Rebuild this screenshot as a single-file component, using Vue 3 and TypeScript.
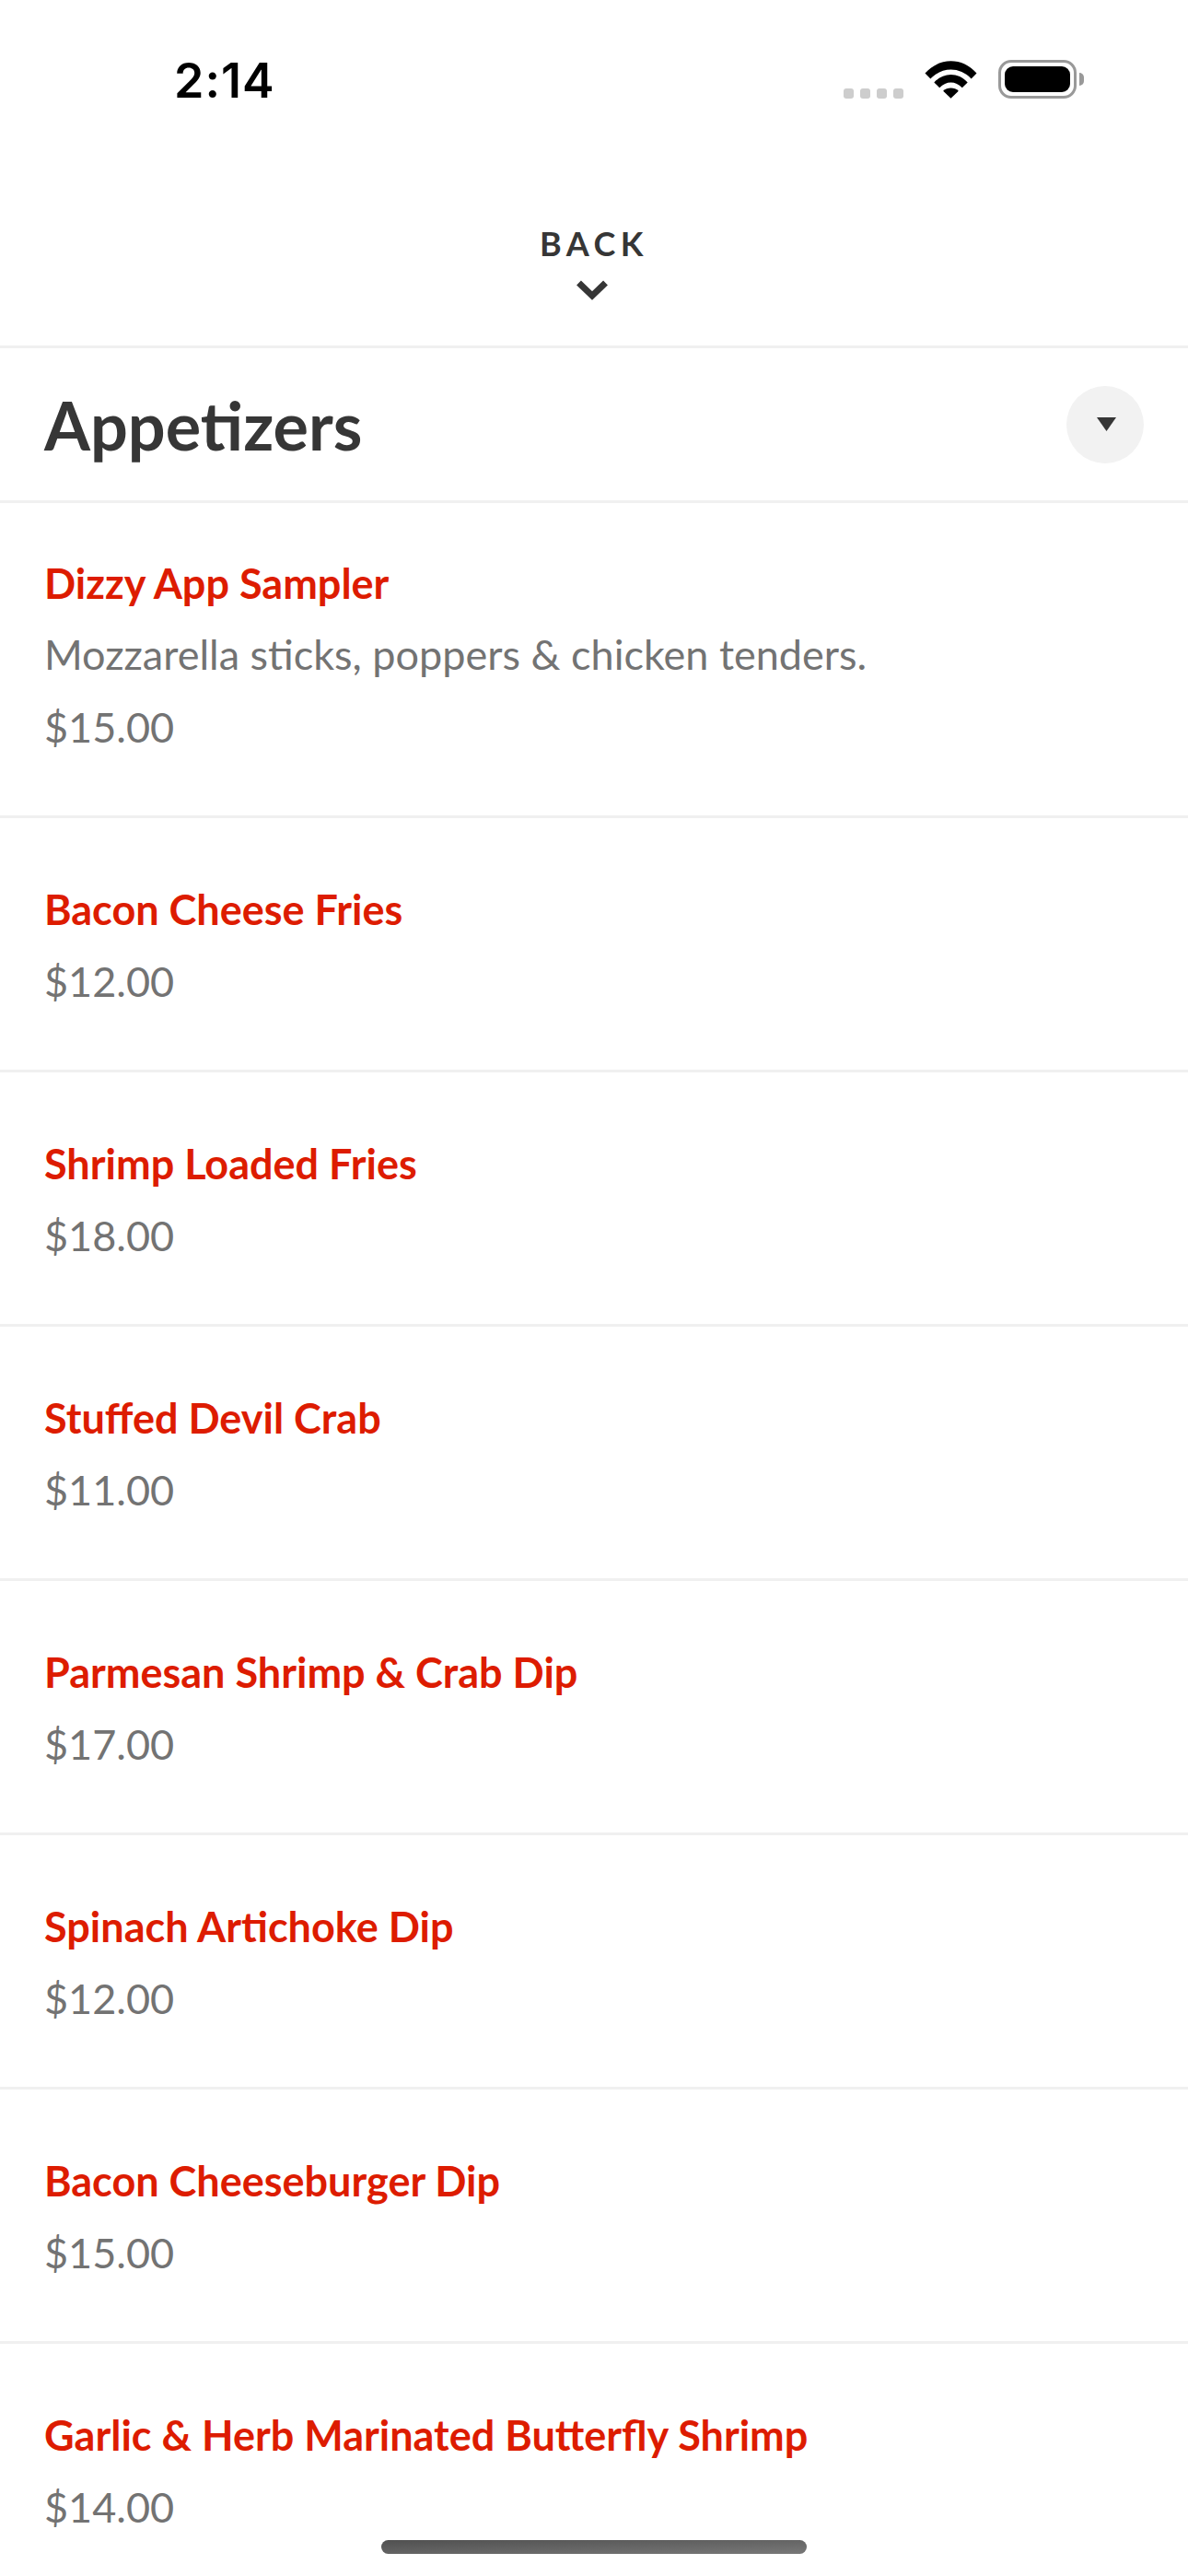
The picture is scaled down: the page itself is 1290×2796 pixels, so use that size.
<script setup lang="ts">
interface Item { name: string; desc?: string; price: string }
const items: Item[] = [
  { name: 'Dizzy App Sampler', desc: 'Mozzarella sticks, poppers & chicken tenders.', price: '$15.00' },
  { name: 'Bacon Cheese Fries', price: '$12.00' },
  { name: 'Shrimp Loaded Fries', price: '$18.00' },
  { name: 'Stuffed Devil Crab', price: '$11.00' },
  { name: 'Parmesan Shrimp & Crab Dip', price: '$17.00' },
  { name: 'Spinach Artichoke Dip', price: '$12.00' },
  { name: 'Bacon Cheeseburger Dip', price: '$15.00' },
  { name: 'Garlic & Herb Marinated Butterfly Shrimp', price: '$14.00' },
]
</script>

<template>
  <div class="screen">
    <div class="status">
      <span class="time">2:14</span>
      <div class="status-icons">
        <div class="dots"><i></i><i></i><i></i><i></i></div>
        <svg class="wifi" width="57" height="42" viewBox="0 0 58 42">
          <path d="M0.5 14.5 C16 -3.5 42 -3.5 57.5 14.5 L51.5 20.5 C39 7 19 7 6.5 20.5 Z" fill="#000"/>
          <path d="M10.5 24.5 C21 13 37 13 47.5 24.5 L41.5 30.5 C34 22.5 24 22.5 16.5 30.5 Z" fill="#000"/>
          <path d="M20.5 34 C25 29.5 33 29.5 37.5 34 L29 42 Z" fill="#000"/>
        </svg>
        <div class="battery"><div class="level"></div></div>
        <div class="nub"></div>
      </div>
    </div>
    <div class="back">
      <span class="back-label">BACK</span>
      <svg class="chev" width="36" height="26" viewBox="0 0 36 26">
        <path d="M3.5 6 L18 20 L32.5 6" fill="none" stroke="#363636" stroke-width="7"/>
      </svg>
    </div>
    <div class="section">
      <h1>Appetizers</h1>
      <div class="toggle"><svg width="22" height="16" viewBox="0 0 22 16"><path d="M0 0 H21 L10.5 15 Z" fill="#363636"/></svg></div>
    </div>
    <div class="list">
      <div v-for="item in items" :key="item.name" class="row">
        <div class="name">{{ item.name }}</div>
        <div v-if="item.desc" class="desc">{{ item.desc }}</div>
        <div class="price">{{ item.price }}</div>
      </div>
    </div>
    <div class="home"></div>
  </div>
</template>

<style>
html, body { margin: 0; background: #fff; }
</style>

<style scoped>
.screen { position: relative; width: 1290px; height: 2796px; overflow: hidden; background: #fff; font-family: Lato, "Noto Sans", sans-serif; }
.status { height: 132px; display: flex; justify-content: space-between; align-items: flex-start; padding: 0 0 0 189px; box-sizing: border-box; }
.time { font-family: Inter, Roboto, sans-serif; font-weight: 600; font-size: 52px; line-height: 62px; margin-top: 57px; color: #000; letter-spacing: 1px; }
.status-icons { display: flex; align-items: flex-start; margin-right: 113px; margin-top: 65px; }
.dots { display: flex; gap: 7px; margin-top: 31px; margin-right: 23px; }
.dots i { display: block; width: 11px; height: 11px; border-radius: 3px; background: #cdcdcd; }
.wifi { margin-right: 23px; }
.battery { width: 85px; height: 42px; box-sizing: border-box; border: 3px solid #999; border-radius: 14px; padding: 4px; }
.level { height: 100%; background: #000; border-radius: 9px; }
.nub { width: 5px; height: 14px; background: #999; border-radius: 0 5px 5px 0; margin: 14px 0 0 3px; }
.back { height: 246px; box-sizing: border-box; border-bottom: 3px solid #f0f0f0; display: flex; flex-direction: column; align-items: center; }
.back-label { color: #363636; font-weight: 700; font-size: 36px; line-height: 44px; letter-spacing: 5.5px; margin-top: 110px; }
.chev { margin-top: 15px; margin-right: 4px; }
.section { height: 168px; box-sizing: border-box; border-bottom: 3px solid #f0f0f0; display: flex; align-items: center; justify-content: space-between; padding: 0 48px; }
h1 { margin: 0; color: #363636; font-weight: 700; font-size: 72px; line-height: 90px; }
.toggle { width: 84px; height: 84px; border-radius: 50%; background: #f2f2f2; display: flex; align-items: center; justify-content: center; }
.toggle svg { margin-left: 3px; }
.row { box-sizing: border-box; height: 276px; border-bottom: 3px solid #f0f0f0; padding: 71px 48px 0; }
.row:first-child { height: 342px; padding-top: 59px; }
.name { color: #dd1c00; font-weight: 700; font-size: 45px; line-height: 56px; }
.desc { color: #737373; font-size: 45px; line-height: 56px; margin-top: 21px; }
.price { color: #737373; font-size: 45px; line-height: 56px; margin-top: 21.5px; }
.desc + .price { margin-top: 22.5px; }
.home { position: absolute; left: 414px; top: 2757px; width: 462px; height: 15px; border-radius: 8px; background: linear-gradient(178deg, #505050, #787878); }
</style>
